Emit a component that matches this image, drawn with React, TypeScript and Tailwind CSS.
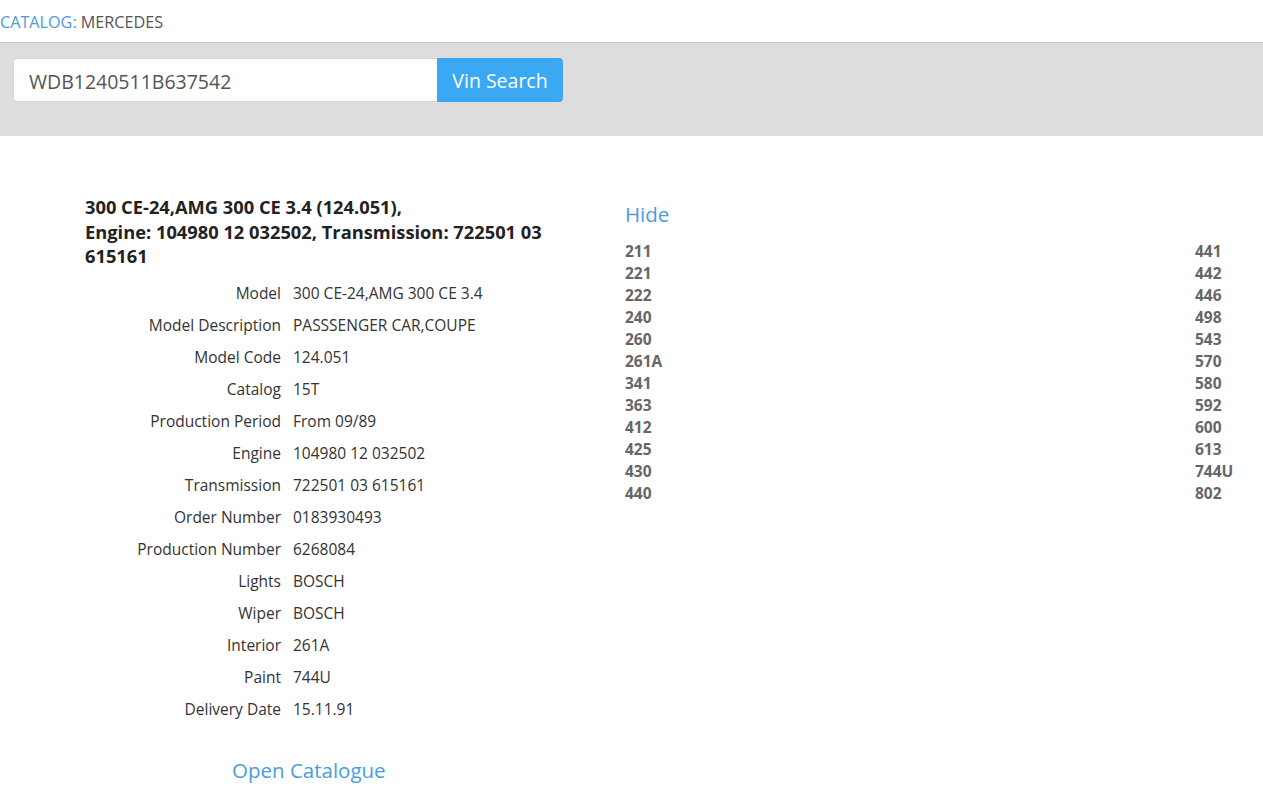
import React from 'react';

const details: [string, string][] = [
  ['Model', '300 CE-24,AMG 300 CE 3.4'],
  ['Model Description', 'PASSSENGER CAR,COUPE'],
  ['Model Code', '124.051'],
  ['Catalog', '15T'],
  ['Production Period', 'From 09/89'],
  ['Engine', '104980 12 032502'],
  ['Transmission', '722501 03 615161'],
  ['Order Number', '0183930493'],
  ['Production Number', '6268084'],
  ['Lights', 'BOSCH'],
  ['Wiper', 'BOSCH'],
  ['Interior', '261A'],
  ['Paint', '744U'],
  ['Delivery Date', '15.11.91'],
];

const codesLeft = ['211', '221', '222', '240', '260', '261A', '341', '363', '412', '425', '430', '440'];
const codesRight = ['441', '442', '446', '498', '543', '570', '580', '592', '600', '613', '744U', '802'];

export default function App() {
  return (
    <div className="min-h-screen bg-white font-['Open_Sans',sans-serif] text-[#333]">
      {/* breadcrumb */}
      <div className="h-[42px] flex items-center pt-[2px] text-[16.2px]">
        <span className="text-[#4a9be0]">CATALOG:</span>
        <span className="ml-1 text-[#555]">MERCEDES</span>
      </div>

      {/* search band */}
      <div className="border-t border-[#c9c9c9] bg-[#dddddd] h-[94px] pt-[15px] pl-[13px]">
        <div className="flex h-[44px]">
          <input
            defaultValue="WDB1240511B637542"
            className="w-[424px] h-full bg-white rounded-l border border-[#d6d6d6] border-r-0 pl-[15px] pt-[2px] text-[19.5px] text-[#555] outline-none"
          />
          <button className="w-[126px] h-full bg-[#3aa8f2] text-white text-[19.5px] pt-[2px] rounded-r">
            Vin Search
          </button>
        </div>
      </div>

      {/* content */}
      <div className="flex pl-[85px] pt-[59px]">
        <div className="w-[540px] shrink-0">
          <h2 className="font-bold text-[18.3px] leading-[24.5px] text-[#222] whitespace-nowrap">
            300 CE-24,AMG 300 CE 3.4 (124.051),
            <br />
            Engine: 104980 12 032502, Transmission: 722501 03
            <br />
            615161
          </h2>
          <div className="mt-[9px] grid grid-cols-[196px_1fr] gap-x-3 text-[15.5px]">
            {details.map(([label, value]) => (
              <React.Fragment key={label}>
                <div className="h-[32px] flex items-center justify-end text-[#333]">{label}</div>
                <div className="h-[32px] flex items-center text-[#333]">{value}</div>
              </React.Fragment>
            ))}
          </div>
          <a href="#" className="block mt-[30px] ml-[147px] text-[20.5px] leading-[28px] text-[#4a9be0]">
            Open Catalogue
          </a>
        </div>

        <div className="flex-1 pt-[5px] pr-[28px]">
          <a href="#" className="block text-[20.5px] leading-[28px] text-[#4a9be0]">
            Hide
          </a>
          <div className="mt-[12px] flex justify-between text-[15.5px] font-bold text-[#666]">
            <div>
              {codesLeft.map((c) => (
                <div key={c} className="h-[22px] leading-[22px]">{c}</div>
              ))}
            </div>
            <div className="w-[40px]">
              {codesRight.map((c) => (
                <div key={c} className="h-[22px] leading-[22px]">{c}</div>
              ))}
            </div>
          </div>
        </div>
      </div>
    </div>
  );
}
